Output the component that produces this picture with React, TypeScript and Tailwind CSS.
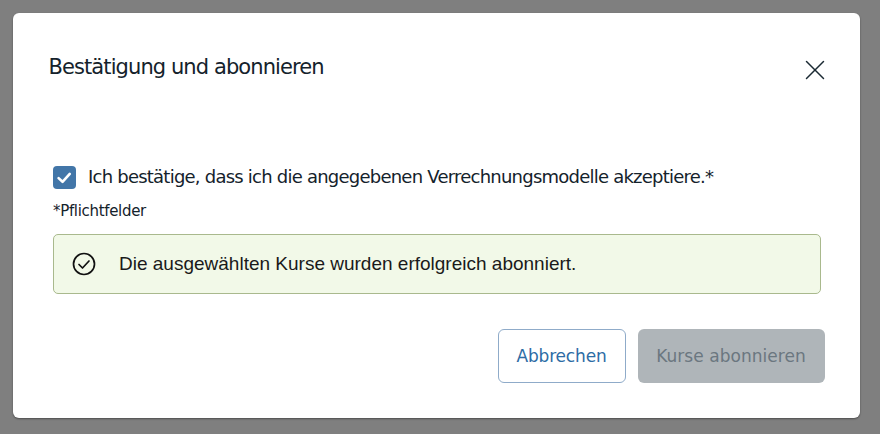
import { X } from 'lucide-react';

const uiFont = "font-['DejaVu_Sans',sans-serif]";

export default function App() {
  return (
    <div className="h-[434px] w-[880px] bg-[#7f7f7f] p-[13px]">
      <div className={`h-[405px] w-[847px] rounded-[6px] bg-white shadow-[0_1px_2px_rgba(0,0,0,0.4)] ${uiFont}`}>
        <div className="flex items-start justify-between pl-[35.5px] pr-[28px] pt-[39px]">
          <h2 className="text-[21px] leading-[30px] tracking-[-0.91px] text-[#14222b]">Bestätigung und abonnieren</h2>
          <button className="mt-[1px] text-[#1b2a33]">
            <X className="h-[34px] w-[34px]" strokeWidth={1.05} />
          </button>
        </div>

        <div className="mt-[78px] px-10">
          <label className="flex items-center gap-[12px]">
            <span className="flex h-[23px] w-[23px] items-center justify-center rounded-[4px] bg-[#4276a8]">
              <svg viewBox="0 0 16 16" className="h-[21px] w-[21px]" fill="none" stroke="white" strokeWidth="2" strokeLinecap="round" strokeLinejoin="round">
                <path d="M3.5 8.5l3 2.8 5.5-6" />
              </svg>
            </span>
            <span className="text-[18px] leading-[24px] tracking-[-0.77px] text-[#14222b]">
              Ich bestätige, dass ich die angegebenen Verrechnungsmodelle akzeptiere.*
            </span>
          </label>
          <p className="mt-[12px] text-[15px] leading-[20px] tracking-[-0.32px] text-[#14222b]">*Pflichtfelder</p>

          <div className="mt-[13px] flex h-[60px] w-[768px] items-center rounded-[5px] border border-[#a9b98d] bg-[#f2f9e8] pl-[18px]">
            <svg viewBox="0 0 24 24" className="h-[24px] w-[24px] text-[#111]" fill="none" stroke="currentColor" strokeWidth="1.7" strokeLinecap="round" strokeLinejoin="round">
              <circle cx="12" cy="12" r="10.5" />
              <path d="M7 12.5l3.5 3.5 6.5-7" />
            </svg>
            <span className="ml-[23px] pt-[1px] font-['Liberation_Sans',sans-serif] text-[19px] text-[#1a1a1a]">
              Die ausgewählten Kurse wurden erfolgreich abonniert.
            </span>
          </div>
        </div>

        <div className="mt-[35px] flex justify-end gap-[12px] pr-[35px]">
          <button className="h-[54px] w-[128px] rounded-[6px] border border-[#8fabc9] bg-white pt-[2px] pr-[1px] text-[17px] tracking-[-0.18px] text-[#2d6ca5]">
            Abbrechen
          </button>
          <button className="h-[54px] w-[187px] rounded-[6px] bg-[#afb5b9] pt-[2px] pr-[1px] text-[17px] tracking-[0.04px] text-[#6b7780]">
            Kurse abonnieren
          </button>
        </div>
      </div>
    </div>
  );
}
